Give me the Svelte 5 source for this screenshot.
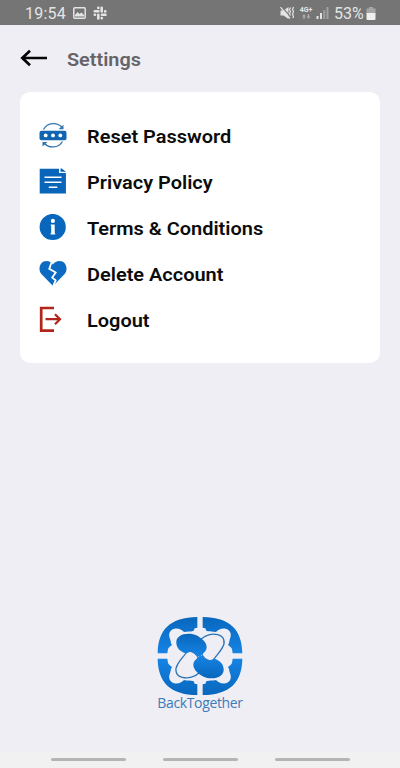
<script lang="ts">
  type IconName = "password" | "policy" | "info" | "heart" | "logout";

  interface MenuItem {
    label: string;
    icon: IconName;
  }

  const items: MenuItem[] = [
    { label: "Reset Password", icon: "password" },
    { label: "Privacy Policy", icon: "policy" },
    { label: "Terms & Conditions", icon: "info" },
    { label: "Delete Account", icon: "heart" },
    { label: "Logout", icon: "logout" },
  ];
</script>

<div class="screen">
  <div class="status-bar">
    <span class="clock">19:54</span>
    <svg class="picture" width="13" height="12" viewBox="0 0 13 12">
      <rect x="0.8" y="0.8" width="11.4" height="10.4" rx="1" fill="none" stroke="#e4e4e4" stroke-width="1.5" />
      <path d="M2 9.5V8l2.5-3 2 2 2-1.5L11 8v1.5z" fill="#e4e4e4" />
    </svg>
    <svg class="slack" width="14" height="14" viewBox="0 0 14 14" stroke="#e4e4e4" stroke-width="2.6" stroke-linecap="round">
      <path d="M1.7 5.2h3.7M8.7 1.7v3.7M8.9 8.7h3.6M5.3 8.8v3.6M5.3 1.7v.2M12.3 5.4h-.2M1.8 8.7h.2M8.8 12.3v-.2" />
    </svg>
    <div class="status-right">
      <svg width="15" height="14" viewBox="0 0 15 14">
        <path d="M0.5 4.5h3L8.5 1v12L3.5 9.5h-3z" fill="#e4e4e4" />
        <path d="M2 0.8l9 10.7" stroke="#757575" stroke-width="1.2" />
        <path d="M0.5 1.2l9.5 11.3" stroke="#e4e4e4" stroke-width="1.3" />
        <path d="M10.5 1.5l-1 2 1 2-1 2 1 2M13.5 1l-1 2.3 1 2.4-1 2.3 1 2.4-.6 1.6" fill="none" stroke="#e4e4e4" stroke-width="1.2" />
      </svg>
      <div class="network">
        <span>4G+</span>
        <svg width="10" height="6" viewBox="0 0 10 6" fill="#adadad">
          <path d="M1 2.5L3 0l2 2.5H3.7V5H2.3V2.5zM5.5 2.5h1.3V0h1.3v2.5h1.3L7.5 5z" />
        </svg>
      </div>
      <svg class="signal" width="13" height="12" viewBox="0 0 13 12">
        <path d="M0.5 9h2v3h-2zM4 6h2v6H4z" fill="#e4e4e4" />
        <path d="M7.3 3h2v9h-2zM10.5 0h2v12h-2z" fill="#a0a0a0" />
      </svg>
      <span class="battery-text">53%</span>
      <svg width="10" height="13" viewBox="0 0 10 13">
        <path d="M3 0h4v1.5h2.5v5h-9v-5H3z" fill="#a6a6a6" />
        <path d="M0.5 6h9v6a1 1 0 0 1-1 1h-7a1 1 0 0 1-1-1z" fill="#f0f0f0" />
      </svg>
    </div>
  </div>

  <header class="top-bar">
    <button class="back" aria-label="Back">
      <svg width="28" height="18" viewBox="0 0 28 18" fill="none" stroke="#050505" stroke-width="2.7">
        <path d="M27 9H2.5M10 1.7L2.3 9l7.7 7.3" />
      </svg>
    </button>
    <h1>Settings</h1>
  </header>

  <main class="card">
    {#each items as item}
      <button class="row">
        <svg class="icon" width="28" height="28" viewBox="0 0 28 28">
          {#if item.icon === "password"}
            <path d="M4.5 7.5C8.5 0.2 18.5-0.3 23.5 6M23.5 19.5C19.5 26.3 9.5 26.8 4.5 20.5" fill="none" stroke="#3275ad" stroke-width="1.3" />
            <path d="M24.5 2.8V7.3H19.5zM3.5 24.5V20H8.5z" fill="#3275ad" />
            <rect x="0.5" y="8.7" width="27" height="9.5" rx="2" fill="#1164b0" />
            <g fill="#fff">
              <circle cx="6.7" cy="13.4" r="1.9" />
              <circle cx="14" cy="13.4" r="1.9" />
              <circle cx="21.3" cy="13.4" r="1.9" />
            </g>
          {:else if item.icon === "policy"}
            <path d="M0.7 0.8H20V5h6.9v20.5H0.7z" fill="#0865b9" />
            <path d="M21.5 0.4h1.2l4.3 3.4H21.5z" fill="#0865b9" />
            <path d="M5.5 9.3h17M5.5 14.2h17M9.8 19.2h8.5" stroke="#fff" stroke-width="1.6" />
          {:else if item.icon === "info"}
            <circle cx="13.7" cy="13" r="13.1" fill="#0867bd" />
            <circle cx="13.9" cy="6.9" r="2.1" fill="#fff" />
            <path d="M11.8 10.6h3.9v8.6h0.5v1.3h-4.600v-1.300h0.600v-7.300h-0.400z" fill="#fff" />
          {:else if item.icon === "heart"}
            <path d="M14 26L2.6 14.3C-1 10.5 .2 4 4.5 1.6 8.2 0 12 1.3 14 4.5 16 1.3 20 0 23.5 1.6 27.8 4 29 10.5 25.4 14.3z" fill="#0b6bc2" />
            <path d="M12.7 2L10.3 8.8l6.4 3.8-3.5 5 3.5 2.7-2.7 6" fill="none" stroke="#fff" stroke-width="1.8" />
          {:else}
            <g fill="none" stroke="#b3241b">
              <path d="M15 2H2.2v22.6H15" stroke-width="2.7" />
              <path d="M6.5 13.2H21M16 8.2l5 5-5 5" stroke-width="2.2" />
            </g>
          {/if}
        </svg>
        <span class="label">{item.label}</span>
      </button>
    {/each}
  </main>

  <footer class="brand">
    <svg width="86" height="80" viewBox="37 36 258 240">
      <defs>
        <linearGradient id="brand-blue" x1="0" y1="0" x2="0" y2="1">
          <stop offset="0" stop-color="#0867bd" />
          <stop offset="1" stop-color="#1683e4" />
        </linearGradient>
        <path id="corner" d="M158 36C76 37 40 74 39 145H68L70 132C73 126 77 124 82 120C77 113 79 107 76 101C70 88 75 74 89 71C102 69 110 73 118 81C127 78 137 81 147 77L150 70L158 68z" />
        <path id="ring-petal" d="M166 105C181 89 203 85 219 89C239 94 243 112 233 128C227 140 216 150 208 162C200 171 188 168 178 157L172 150z" />
        <path id="solid-petal" d="M95 114C93 96 111 86 131 86C151 86 164 94 176 106C188 118 189 132 180 141L168 153L158 153C150 141 137 135 122 145C106 139 96 130 95 114z" />
      </defs>
      <g fill="url(#brand-blue)">
        <use href="#corner" />
        <use href="#corner" transform="matrix(-1 0 0 1 332 0)" />
        <use href="#corner" transform="matrix(1 0 0 -1 0 306)" />
        <use href="#corner" transform="matrix(-1 0 0 -1 332 306)" />
      </g>
      <g fill="#efeef5" stroke="#2a74b8" stroke-width="4">
        <use href="#ring-petal" />
        <use href="#ring-petal" transform="rotate(180 166 153)" />
      </g>
      <g fill="url(#brand-blue)">
        <use href="#solid-petal" />
        <use href="#solid-petal" transform="rotate(180 166 153)" />
      </g>
      <!-- white lobes wrap around the waist between the two solid petals -->
      <g fill="#efeef5">
        <path id="lobe" d="M184 112C192 126 189 136 176 150C182 160 193 166 203 160L212 140L205 112z" />
        <use href="#lobe" transform="rotate(180 166 153)" />
      </g>
    </svg>
    <span class="brand-name">BackTogether</span>
  </footer>

  <nav class="nav-bar">
    <span></span>
    <span></span>
    <span></span>
  </nav>
</div>

<style>
  :global(body) {
    margin: 0;
  }

  .screen {
    display: flex;
    flex-direction: column;
    width: 400px;
    height: 768px;
    overflow: hidden;
    background: #efeef5;
    font-family: Roboto, sans-serif;
  }

  .status-bar {
    display: flex;
    align-items: center;
    box-sizing: border-box;
    height: 25px;
    padding: 1px 24px 0 25px;
    background: #757575;
    color: #e4e4e4;
    font-size: 16px;
  }

  .clock {
    width: 48px;
    letter-spacing: 0.2px;
  }

  .slack {
    margin-left: 7px;
  }

  .status-right {
    display: flex;
    align-items: center;
    margin-left: auto;
  }

  .network {
    display: flex;
    flex-direction: column;
    align-items: center;
    width: 14px;
    margin: 0 3px 0 4px;
    font-size: 7px;
    font-weight: 700;
    line-height: 7px;
  }

  .signal {
    margin-right: 5px;
  }

  .battery-text {
    width: 32px;
    font-size: 16px;
  }

  button {
    padding: 0;
    border: 0;
    background: none;
    font: inherit;
    text-align: left;
    cursor: pointer;
  }

  .top-bar {
    display: flex;
    align-items: center;
    height: 67px;
    padding-left: 20px;
  }

  .back {
    display: flex;
    width: 47px;
    margin-top: -1px;
  }

  h1 {
    margin: 1px 0 0;
    color: #666468;
    font-size: 19px;
    font-weight: 600;
    transform: scaleX(1.045);
    transform-origin: left;
  }

  .card {
    box-sizing: border-box;
    height: 271px;
    margin: 0 20px;
    padding: 21px 19px;
    border-radius: 10px;
    background: #fff;
  }

  .row {
    display: flex;
    align-items: center;
    width: 100%;
    height: 46px;
    color: #0c0c0c;
    font-size: 19px;
    font-weight: 600;
  }

  .label {
    transform: scaleX(1.05);
    transform-origin: left;
  }

  .icon {
    margin-right: 20px;
  }

  .brand {
    display: flex;
    flex-direction: column;
    align-items: center;
    margin-top: auto;
    padding-bottom: 42px;
  }

  .brand-name {
    margin-top: -2px;
    color: #3d7ab8;
    font-family: "Open Sans", sans-serif;
    font-size: 14px;
    line-height: 15px;
    letter-spacing: -0.35px;
  }

  .nav-bar {
    display: flex;
    justify-content: center;
    gap: 37px;
    height: 10px;
    padding-top: 6px;
    background: #f1f1f1;
  }

  .nav-bar span {
    width: 75px;
    height: 3px;
    border-radius: 2px;
    background: #b4b4b4;
  }
</style>
